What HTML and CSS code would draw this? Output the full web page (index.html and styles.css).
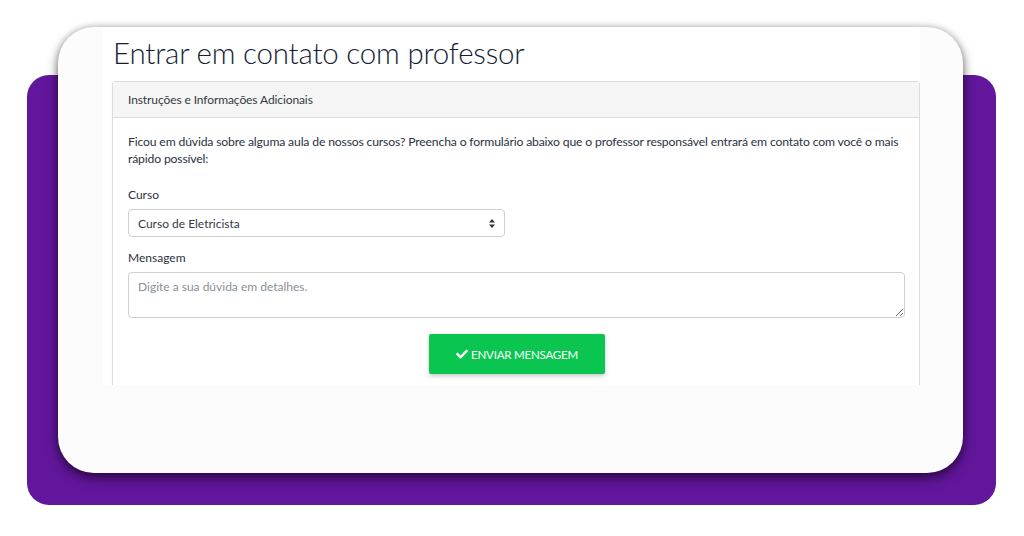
FILE: index.html
```html
<!DOCTYPE html>
<html lang="pt-BR">
<head>
<meta charset="utf-8">
<title>Entrar em contato com professor</title>
<link rel="stylesheet" href="styles.css">
</head>
<body>
<div class="stage">
  <div class="purple">
    <div class="card">
      <div class="shot">
        <h1 class="title">Entrar em contato com professor</h1>
        <div class="panel">
          <div class="panel-head">Instruções e Informações Adicionais</div>
          <div class="panel-body">
            <p class="intro">Ficou em dúvida sobre alguma aula de nossos cursos? Preencha o formulário abaixo que o professor responsável entrará em contato com você o mais rápido possível:</p>
            <label class="label">Curso</label>
            <div class="select">
              <span>Curso de Eletricista</span>
              <svg class="caret" width="6" height="9" viewBox="0 0 6 9"><path d="M3 0 L6 3.5 H0 Z M3 9 L0 5.5 H6 Z" fill="#333"/></svg>
            </div>
            <label class="label label-msg">Mensagem</label>
            <textarea class="textarea" placeholder="Digite a sua dúvida em detalhes."></textarea>
            <div class="actions">
              <button class="btn" type="button"><svg class="check" width="12" height="10" viewBox="0 0 512 400"><path d="M173.9 389.8L7.5 223.4c-10-10-10-26.2 0-36.2l36.2-36.2c10-10 26.2-10 36.2 0L192 263.1 432.1 23c10-10 26.2-10 36.2 0l36.2 36.2c10 10 10 26.2 0 36.2L210.1 389.8c-10 10-26.2 10-36.2 0z" fill="#fff"/></svg>ENVIAR MENSAGEM</button>
            </div>
          </div>
        </div>
      </div>
    </div>
  </div>
</div>
</body>
</html>
```
FILE: styles.css
```css
* { box-sizing: border-box; }
html, body { margin: 0; padding: 0; background: #ffffff; }
body { width: 1024px; height: 536px; overflow: hidden; font-family: "Lato", "Open Sans", sans-serif; color: #2a3140; }

.stage { padding-top: 75px; padding-left: 27px; width: 1024px; }
.purple {
  width: 969px;
  height: 430px;
  background: #62169c;
  border-radius: 22px;
  padding-left: 31px;
}
.card {
  position: relative;
  top: -48px;
  width: 905px;
  height: 446px;
  background: #fcfcfc;
  border-radius: 36px;
  box-shadow: 0 5px 12px rgba(0, 0, 0, 0.55), 0 0 6px rgba(0, 0, 0, 0.2);
  padding-left: 45px;
}
.shot {
  width: 817px;
  height: 358px;
  background: #ffffff;
  overflow: hidden;
  padding-left: 9px;
  padding-top: 6px;
}
.title {
  margin: 0 0 0 1px;
  font-weight: 300;
  font-size: 29.5px;
  line-height: 40px;
  color: #141e35;
  letter-spacing: -0.2px;
  height: 48px;
}
.panel {
  width: 808px;
  border: 1px solid #dddddd;
  border-radius: 3px;
  background: #fff;
  box-shadow: 0 1px 2px rgba(0,0,0,0.05);
}
.panel-head {
  height: 36px;
  background: #f5f5f5;
  border-bottom: 1px solid #dddddd;
  padding-left: 15px;
  font-size: 12px;
  line-height: 35px;
  color: #333a46;
  letter-spacing: -0.1px;
}
.panel-body { padding: 15px 14px 20px 15px; }
.intro {
  margin: 0 0 19px 0;
  font-size: 12.2px;
  line-height: 17px;
  color: #2b3242;
  letter-spacing: -0.16px;
}
.label {
  display: block;
  font-size: 12px;
  line-height: 17px;
  color: #2b3242;
  margin-bottom: 6px;
}
.label-msg { margin-top: 12px; }
.select {
  width: 377px;
  height: 28px;
  border: 1px solid #cfcfcf;
  border-radius: 4px;
  display: flex;
  align-items: center;
  justify-content: space-between;
  padding: 0 9px 0 9px;
  font-size: 12px;
  color: #333a46;
}
.textarea {
  display: block;
  width: 777px;
  height: 46px;
  border: 1px solid #cfcfcf;
  border-radius: 4px;
  padding: 6px 9px;
  font-family: "Lato", "Open Sans", sans-serif;
  font-size: 12px;
  color: #333;
  resize: vertical;
  margin: 0;
}
.textarea::placeholder { color: #8a8f98; }
.actions { display: flex; justify-content: center; padding-top: 16px; }
.btn {
  width: 176px;
  height: 40px;
  background: #0ac650;
  border: none;
  border-radius: 2px;
  color: #ffffff;
  font-family: "Lato", "Open Sans", sans-serif;
  font-size: 11.5px;
  letter-spacing: -0.2px;
  display: flex;
  align-items: center;
  justify-content: center;
  gap: 3px;
  box-shadow: 0 2px 4px rgba(0,0,0,0.22);
  padding: 0;
  margin-left: 1px;
}
.check { display: block; }
```
